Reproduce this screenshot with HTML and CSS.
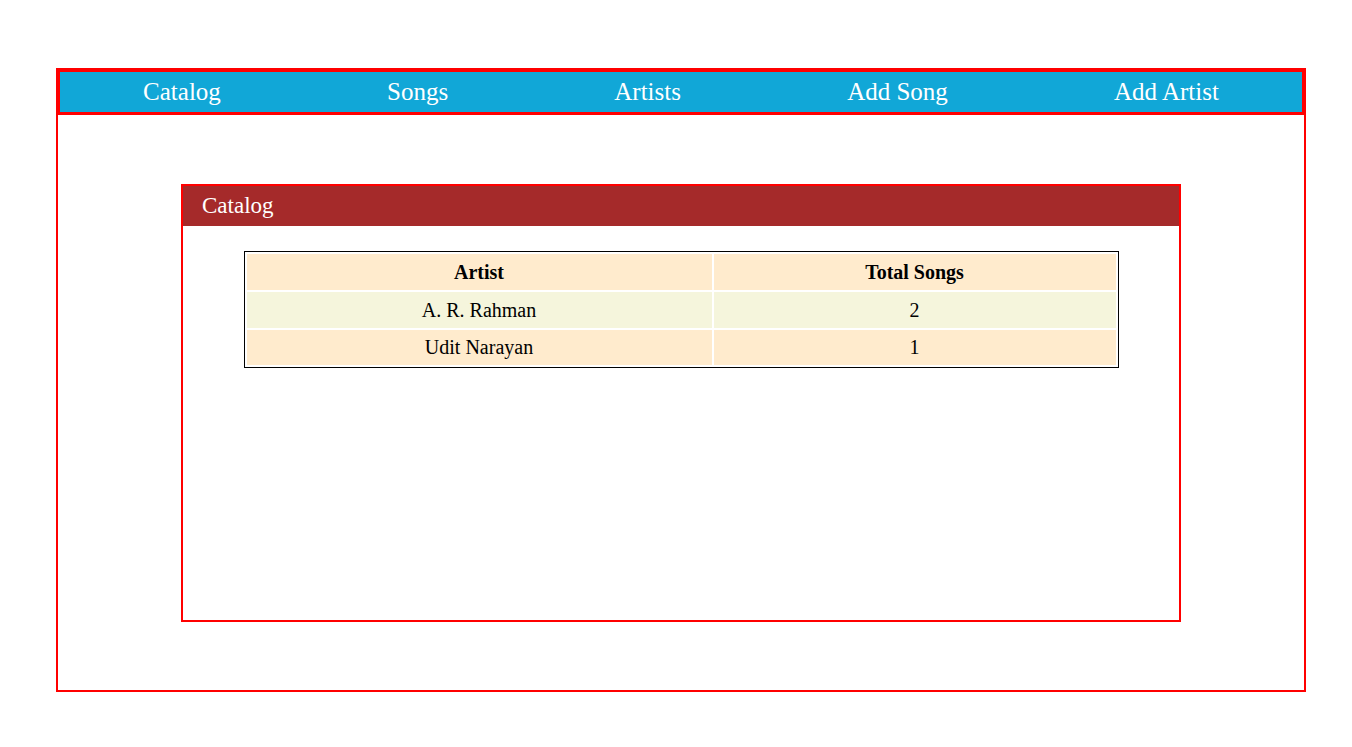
FILE: index.html
```html
<!DOCTYPE html>
<html>
<head>
<meta charset="utf-8">
<title>Catalog</title>
<link rel="stylesheet" href="styles.css">
</head>
<body>
<div class="app">
  <nav class="nav">
    <a class="nav-link" href="#">Catalog</a>
    <a class="nav-link" href="#">Songs</a>
    <a class="nav-link" href="#">Artists</a>
    <a class="nav-link" href="#">Add Song</a>
    <a class="nav-link" href="#">Add Artist</a>
  </nav>
  <main class="main">
    <section class="panel">
      <div class="panel-header">Catalog</div>
      <table class="catalog">
        <thead>
          <tr class="row-a"><th class="col-artist">Artist</th><th>Total Songs</th></tr>
        </thead>
        <tbody>
          <tr class="row-b"><td>A. R. Rahman</td><td>2</td></tr>
          <tr class="row-a"><td>Udit Narayan</td><td>1</td></tr>
        </tbody>
      </table>
    </section>
  </main>
</div>
</body>
</html>
```
FILE: styles.css
```css
html, body {
  margin: 0;
  padding: 0;
  background: #ffffff;
}
body {
  margin: 8px;
  font-family: "Liberation Serif", "Times New Roman", serif;
  color: #000;
}
.app {
  box-sizing: border-box;
  width: 1250px;
  height: 624px;
  margin: 60px 0 0 48px;
  border: 2px solid #ff0000;
}
.nav {
  box-sizing: border-box;
  height: 45px;
  display: flex;
  justify-content: space-around;
  align-items: center;
  background: #11a7d7;
  border: 2px solid #ff0000;
  border-bottom-width: 3px;
}
.nav-link {
  color: #ffffff;
  text-decoration: none;
  font-size: 25px;
}
.main {
  padding-top: 69px;
}
.panel {
  box-sizing: border-box;
  width: 1000px;
  height: 438px;
  margin: 0 auto;
  border: 2px solid #ff0000;
}
.panel-header {
  height: 40px;
  display: flex;
  align-items: center;
  padding-left: 19px;
  background: #a52a2a;
  color: #ffffff;
  font-size: 23px;
}
.catalog {
  width: 875px;
  margin: 25px auto 0;
  border: 1px solid #000;
  border-collapse: separate;
  border-spacing: 2px;
  font-size: 20px;
}
.catalog th,
.catalog td {
  height: 35px;
  padding: 1px 0 0;
  text-align: center;
}
.catalog td {
  height: 34.5px;
}
.col-artist {
  width: 465px;
}
.row-a {
  background: #ffebcd;
}
.row-b {
  background: #f5f5dc;
}
```
